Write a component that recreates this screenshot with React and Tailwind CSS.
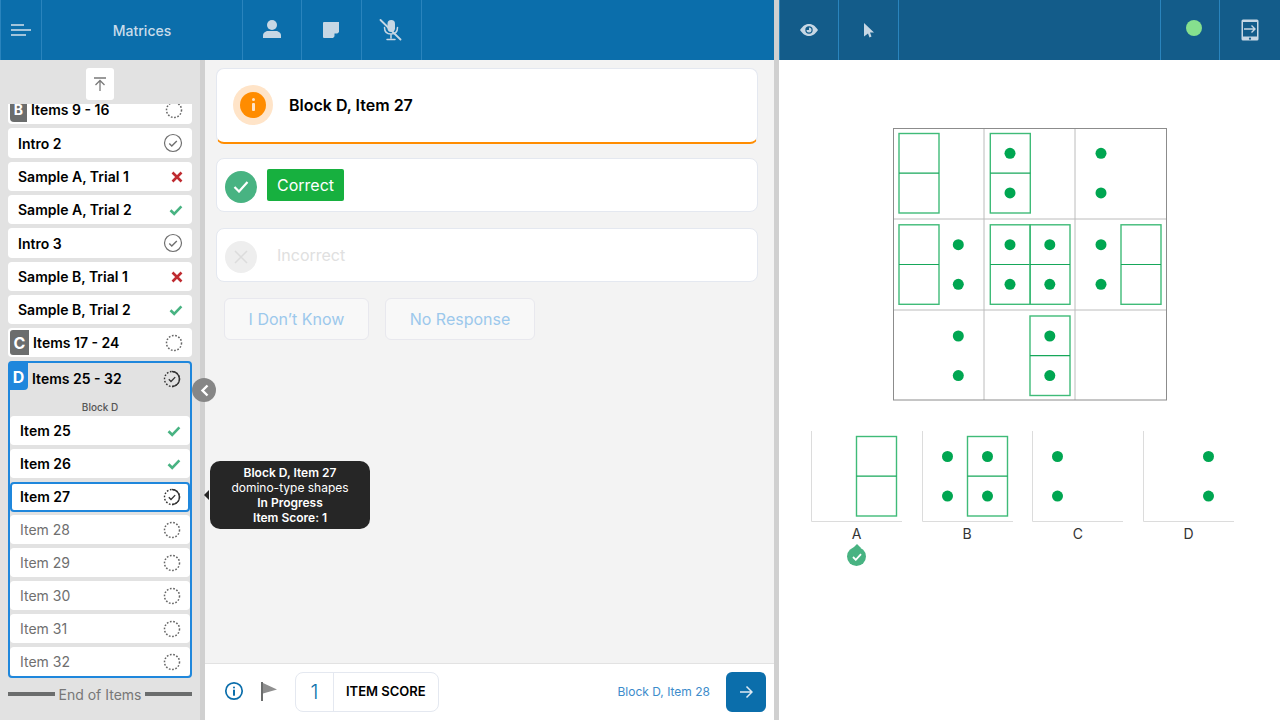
import React from "react";

const Dashed = ({ c = "#666", cls = "" }) => (
  <svg width="18" height="18" viewBox="0 0 18 18" className={`shrink-0 ${cls}`}>
    <circle cx="9" cy="9" r="7.5" fill="none" stroke={c} strokeWidth="1.5" strokeDasharray="1.7 1.6" />
  </svg>
);
const CheckCircle = () => (
  <svg width="20" height="20" viewBox="0 0 20 20" className="shrink-0">
    <circle cx="10" cy="10" r="8.5" fill="none" stroke="#6f6f6f" strokeWidth="1.2" />
    <path d="M6.3 10.4l2.5 2.5 5-5" fill="none" stroke="#6f6f6f" strokeWidth="1.4" />
  </svg>
);
const Progress = () => (
  <svg width="18" height="18" viewBox="0 0 18 18" className="shrink-0">
    <circle cx="9" cy="9" r="7.5" fill="none" stroke="#333" strokeWidth="1.4" strokeDasharray="1.7 1.6" />
    <path d="M9 1.5A7.5 7.5 0 0 1 9 16.5" fill="none" stroke="#333" strokeWidth="1.4" />
    <path d="M5.8 9.3l2.2 2.2 4.2-4.4" fill="none" stroke="#333" strokeWidth="1.3" />
  </svg>
);
const Tick = () => (
  <svg width="14" height="12" viewBox="0 0 14 12" className="shrink-0">
    <path d="M1.5 6.2l3.7 3.6 7.2-7.4" fill="none" stroke="#48b382" strokeWidth="2.6" />
  </svg>
);
const Cross = () => (
  <svg width="12" height="12" viewBox="0 0 12 12" className="shrink-0">
    <path d="M1.5 1.5l9 9M10.5 1.5l-9 9" fill="none" stroke="#bf2b30" strokeWidth="2.6" />
  </svg>
);

const Row = ({ label, icon, h = "h-[29px]", pr = "pr-[9px]" }) => (
  <div className={`${h} ${pr} shrink-0 bg-white rounded-[4px] flex items-center justify-between pl-[10px] text-[14px] font-semibold text-black`}>
    <span>{label}</span>
    {icon}
  </div>
);
const IconBox = ({ children, cls = "" }) => <span className={`w-[20px] flex justify-center ${cls}`}>{children}</span>;

const Item = ({ label, icon, dim, selected }) => (
  <div
    className={`shrink-0 bg-white rounded-[4px] flex items-center justify-between pl-[10px] text-[14px] ${
      dim ? "text-[#6f6f6f] font-normal pr-[9px]" : "text-black font-semibold pr-[9px]"
    } ${selected ? "h-[30px] border-2 border-[#1f87dc] -my-[0.5px]" : "h-[29px]"}`}
  >
    <span className={selected ? "-ml-[2px]" : ""}>{label}</span>
    <span className={selected ? "-mr-[2px] flex" : "flex"}>{icon}</span>
  </div>
);

const HCell = ({ children, cls = "w-[60px]", line = "border-[#2a84bd]" }) => (
  <div className={`${cls} h-full shrink-0 border-r ${line} flex items-center justify-center`}>{children}</div>
);

const Domino = ({ x, y }) => (
  <g fill="none" stroke="#3fbb78" strokeWidth="1.4">
    <rect x={x} y={y} width="40" height="79.5" />
    <line x1={x} x2={x + 40} y1={y + 39.7} y2={y + 39.7} stroke="#16a75a" strokeWidth="1.2" />
  </g>
);
const Dots = ({ x, y }) => (
  <g fill="#00a651">
    <circle cx={x} cy={y} r="5.5" />
    <circle cx={x} cy={y + 39.6} r="5.5" />
  </g>
);

const Matrix = () => (
  <svg width="274" height="273" viewBox="0 0 274 273" className="shrink-0">
    <g stroke="#bcbcbc" strokeWidth="1">
      <line x1="91" x2="91" y1="0" y2="272" />
      <line x1="182" x2="182" y1="0" y2="272" />
      <line x1="0" x2="273" y1="91" y2="91" />
      <line x1="0" x2="273" y1="182" y2="182" />
    </g>
    <rect x="0.5" y="0.5" width="273" height="271.5" fill="none" stroke="#8c8c8c" />
    <Domino x={6} y={5.5} />
    <Domino x={97.3} y={5.5} />
    <Dots x={117} y={25.3} />
    <Dots x={208} y={25.3} />
    <Domino x={6} y={96.8} />
    <Dots x={65.3} y={116.7} />
    <Domino x={97.3} y={96.8} />
    <Domino x={137} y={96.8} />
    <Dots x={117} y={116.7} />
    <Dots x={156.8} y={116.7} />
    <Dots x={208} y={116.7} />
    <Domino x={228} y={96.8} />
    <Dots x={65.3} y={208} />
    <Domino x={137} y={188} />
    <Dots x={156.8} y={208} />
  </svg>
);

const Option = ({ label, children, badge }) => (
  <div className="relative flex flex-col items-center w-[91px] shrink-0">
    <svg width="91" height="91" viewBox="0 0 91 91">
      <path d="M0.5 0V90.5H91" fill="none" stroke="#dcdcdc" />
      {children}
    </svg>
    <span className="mt-[3px] text-[14px] leading-[17px] text-[#333]">{label}</span>
    {badge}
  </div>
);

export default function App() {
  return (
    <div className="w-[1280px] h-[720px] flex overflow-hidden relative font-[Inter,sans-serif] bg-white">
      {/* left half */}
      <div className="w-[774px] h-full flex flex-col shrink-0">
        <header className="h-[60px] bg-[#0b6eab] flex shrink-0 border-l border-[#2a84bd]">
          <HCell cls="w-[41px]">
            <svg width="20" height="12" viewBox="0 0 20 12" fill="none" stroke="#d3e1ec" strokeWidth="1.6" className="-ml-[1px]">
              <path d="M0 1h13M0 6h20M0 11h15" />
            </svg>
          </HCell>
          <HCell cls="w-[201px]">
            <span className="text-[14px] font-medium text-[#c9dcea]">Matrices</span>
          </HCell>
          <HCell cls="w-[59px]">
            <svg width="18" height="18" viewBox="0 0 18 18" fill="#c7d7e4" className="-mt-[2px] -ml-[1px]">
              <circle cx="9" cy="5" r="5" />
              <path d="M0 18v-2.5C0 12.5 3 11 5 11h8c2 0 5 1.5 5 4.5V18z" />
            </svg>
          </HCell>
          <HCell>
            <svg width="16" height="16" viewBox="0 0 16 16" fill="#c7d7e4" className="-ml-[1px]">
              <path d="M1 0h15v10l-6 6H1a1 1 0 0 1-1-1V1a1 1 0 0 1 1-1z" />
              <path d="M11.5 11.5H15L11.5 15z" fill="#0b6eab" />
            </svg>
          </HCell>
          <HCell>
            <svg width="24" height="22" viewBox="0 0 24 22" fill="none" stroke="#c7d7e4" strokeLinecap="round" className="-ml-[1px]">
              <rect x="8.5" y="1" width="7.5" height="12" rx="3.7" fill="#c7d7e4" stroke="none" />
              <path d="M5.5 8.5c0 4 2.5 6.500 6.500 6.500s6.500-2.500 6.500-6.500M12 15v4M8 20.500h8" strokeWidth="1.5" />
              <path d="M1.500 1l20 19.500" strokeWidth="1.8" />
            </svg>
          </HCell>
        </header>
        <div className="flex-1 flex min-h-0">
          {/* sidebar */}
          <aside className="w-[205px] h-full shrink-0 bg-[#e2e2e2] border-r-[5px] border-[#d0d0d0] flex flex-col pl-[8px] pr-[8px]">
            <div className="h-[44px] shrink-0 flex justify-center pt-[8px]">
              <div className="w-[28px] h-[32px] bg-white rounded-[3px] flex items-center justify-center">
                <svg width="14" height="14" viewBox="0 0 14 14" fill="none" stroke="#7a7a7a" strokeWidth="1.3">
                  <path d="M1 1h12M7 14V3.500M2.500 8L7 3.500 11.500 8" />
                </svg>
              </div>
            </div>
            <div className="flex-1 min-h-0">
              <div className="flex flex-col gap-[4px]">
                <div className="h-[20px] shrink-0 bg-white rounded-b-[4px] flex items-start pl-[2px] pr-[8px] text-[14px] leading-[12px] font-semibold text-black">
                  <span className="w-[17px] h-[18px] bg-[#6b6d6d] rounded-bl-[4px] text-white font-bold text-[14px] leading-[12px] flex items-start justify-center">B</span>
                  <span className="ml-[4px] flex-1">Items 9 - 16</span>
                  <IconBox cls="h-[16px] overflow-hidden"><Dashed cls="-mt-[3px]" /></IconBox>
                </div>
                <Row label="Intro 2" h="h-[30px]" icon={<CheckCircle />} />
                <Row label="Sample A, Trial 1" icon={<Cross />} />
                <Row label="Sample A, Trial 2" icon={<Tick />} />
                <Row label="Intro 3" h="h-[30px]" icon={<CheckCircle />} />
                <Row label="Sample B, Trial 1" icon={<Cross />} />
                <Row label="Sample B, Trial 2" icon={<Tick />} />
                <div className="h-[29px] shrink-0 bg-white rounded-[4px] flex items-center pl-[2px] pr-[8px] text-[14px] font-semibold text-black">
                  <span className="w-[19px] h-[25px] bg-[#6b6d6d] rounded-l-[3px] text-white font-bold text-[16px] flex items-center justify-center">C</span>
                  <span className="ml-[4px] flex-1">Items 17 - 24</span>
                  <IconBox><Dashed /></IconBox>
                </div>
                <div className="h-[317px] shrink-0 border-2 border-[#1f87dc] rounded-[4px] flex flex-col">
                  <div className="h-[31px] flex items-center shrink-0 pr-[9px] text-[14px] font-semibold text-black">
                    <span className="self-start w-[19px] h-[27px] bg-[#1f87dc] rounded-br-[4px] text-white font-bold text-[16px] flex items-center justify-center -ml-[1px]">D</span>
                    <span className="ml-[4px] flex-1">Items 25 - 32</span>
                    <Progress />
                  </div>
                  <div className="h-[22px] shrink-0 flex items-end justify-center pb-[4px] text-[10px] font-medium leading-none text-[#555]">Block D</div>
                  <div className="flex flex-col gap-[4px]">
                    <Item label="Item 25" icon={<Tick />} />
                    <Item label="Item 26" icon={<Tick />} />
                    <Item label="Item 27" selected icon={<Progress />} />
                    <Item label="Item 28" dim icon={<Dashed />} />
                    <Item label="Item 29" dim icon={<Dashed />} />
                    <Item label="Item 30" dim icon={<Dashed />} />
                    <Item label="Item 31" dim icon={<Dashed />} />
                    <Item label="Item 32" dim icon={<Dashed />} />
                  </div>
                </div>
                <div className="mt-[2px] h-[20px] flex items-center gap-[4px] text-[14px] text-[#777]">
                  <span className="flex-1 h-[4px] bg-[#6b6d6d]" />
                  <span>End of Items</span>
                  <span className="flex-1 h-[4px] bg-[#6b6d6d]" />
                </div>
              </div>
            </div>
          </aside>
          {/* centre */}
          <main className="flex-1 min-w-0 bg-[#f3f3f3] flex flex-col">
            <div className="flex-1 min-h-0 pt-[8px] pl-[11px] pr-[16px] flex flex-col">
              <div className="h-[76px] bg-white rounded-[8px] border border-[#e4e8f0] border-b-2 border-b-[#ff8c00] flex items-center pl-[16px] pb-[2px]">
                <div className="w-[40px] h-[40px] rounded-full bg-[#ffe4c8] flex items-center justify-center">
                  <div className="w-[26px] h-[26px] rounded-full bg-[#ff8c00] flex flex-col items-center justify-center gap-[2px]">
                    <span className="w-[3px] h-[3px] bg-[#ffe4c8] rounded-full" />
                    <span className="w-[3px] h-[8px] bg-[#ffe4c8] rounded-[1px]" />
                  </div>
                </div>
                <span className="ml-[16px] text-[16px] font-semibold text-black">Block D, Item 27</span>
              </div>
              <div className="mt-[14px] h-[54px] bg-white rounded-[8px] border border-[#e4e8f0] flex items-center pl-[8px]">
                <div className="w-[32px] h-[32px] rounded-full bg-[#48b382] flex items-center justify-center mt-[3px]">
                  <svg width="16" height="13" viewBox="0 0 16 13" fill="none" stroke="#fff" strokeWidth="2.2">
                    <path d="M1.500 7l4.500 4.500 8.500-9.500" />
                  </svg>
                </div>
                <div className="ml-[10px] w-[77px] h-[32px] bg-[#17b03f] rounded-[2px] text-white text-[16px] flex items-center justify-center">Correct</div>
              </div>
              <div className="mt-[16px] h-[54px] bg-white rounded-[8px] border border-[#e4e8f0] flex items-center pl-[8px]">
                <div className="w-[32px] h-[32px] rounded-full bg-[#eeeeee] flex items-center justify-center mt-[3px]">
                  <svg width="14" height="14" viewBox="0 0 14 14" fill="none" stroke="#dcdcdc" strokeWidth="1.5">
                    <path d="M1 1l12 12M13 1L1 13" />
                  </svg>
                </div>
                <span className="ml-[20px] text-[16px] text-[#e0e0e0]">Incorrect</span>
              </div>
              <div className="mt-[16px] flex gap-[16px] pl-[8px]">
                <div className="w-[145px] h-[42px] rounded-[6px] bg-[#f8f8f8] border border-[#e8e8ee] text-[16px] text-[#9cc8ec] flex items-center justify-center">I Don’t Know</div>
                <div className="w-[150px] h-[42px] rounded-[6px] bg-[#f8f8f8] border border-[#e8e8ee] text-[16px] text-[#9cc8ec] flex items-center justify-center">No Response</div>
              </div>
            </div>
            <footer className="h-[57px] shrink-0 bg-white border-t border-[#e2e2e2] flex items-center pl-[19px] pr-[8px]">
              <svg width="20" height="20" viewBox="0 0 20 20" fill="none" className="-mt-[3px]">
                <circle cx="10" cy="10" r="8.2" stroke="#0b6eab" strokeWidth="1.7" />
                <rect x="9" y="5.5" width="2" height="2" rx="1" fill="#0b6eab" />
                <rect x="9" y="8.7" width="2" height="6" fill="#0b6eab" />
              </svg>
              <svg width="17" height="19" viewBox="0 0 17 19" className="ml-[17px] -mt-[1px]">
                <rect x="0" y="0" width="2" height="19" fill="#6b6d6d" />
                <path d="M2 1l14 6.500L2 11.500z" fill="#8f8f8f" />
              </svg>
              <div className="ml-[17px] w-[144px] h-[40px] rounded-[8px] border border-[#e4e8f0] flex items-center">
                <span className="w-[38px] h-full border-r border-[#e4e8f0] flex items-center justify-center text-[20px] font-light text-[#0b6eab]">1</span>
                <span className="ml-[12px] text-[13px] font-semibold text-black">ITEM SCORE</span>
              </div>
              <span className="ml-auto text-[12px] text-[#3d8ccb]">Block D, Item 28</span>
              <div className="ml-[16px] w-[40px] h-[40px] rounded-[6px] bg-[#0b6eab] flex items-center justify-center">
                <svg width="14" height="14" viewBox="0 0 14 14" fill="none" stroke="#dfeaf3" strokeWidth="1.5">
                  <path d="M1 7h12M7.500 1.500L13 7l-5.500 5.500" />
                </svg>
              </div>
            </footer>
          </main>
        </div>
      </div>
      {/* divider */}
      <div className="w-[5px] h-full shrink-0 bg-[#d0d0d0]" />
      {/* right half */}
      <div className="flex-1 min-w-0 h-full flex flex-col bg-white">
        <header className="h-[60px] shrink-0 bg-[#135c8a] flex border-l border-[#2a84bd]">
          <HCell cls="w-[59px]">
            <svg width="18" height="12" viewBox="0 0 18 12">
              <path d="M0 6C3 1.500 6 0 9 0s6 1.500 9 6c-3 4.500-6 6-9 6S3 10.500 0 6z" fill="#c7d7e4" />
              <circle cx="9" cy="6" r="3.7" fill="#135c8a" />
              <path d="M9 3.500a2.500 2.500 0 1 1-2.500 2.500H9z" fill="#c7d7e4" />
            </svg>
          </HCell>
          <HCell cls="w-[60px]">
            <svg width="10" height="15" viewBox="0 0 10 15" fill="#c7d7e4">
              <path d="M0 0l10 9.500H6l1.500 4-2 1L4 10.500 0 13.500z" />
            </svg>
          </HCell>
          <HCell cls="flex-1" />
          <HCell cls="w-[59px]">
            <span className="w-[16px] h-[16px] rounded-full bg-[#86e08e] -mt-[4px] ml-[8px]" />
          </HCell>
          <div className="w-[60px] h-full flex items-center justify-center">
            <svg width="18" height="22" viewBox="0 0 18 22" fill="none">
              <rect x="0.5" y="0.5" width="17" height="21" rx="1.5" fill="#c7d7e4" />
              <rect x="2" y="3" width="14" height="14.5" fill="#135c8a" />
              <circle cx="9" cy="19.7" r="1.1" fill="#135c8a" />
              <path d="M3 10h11M10.500 6.500L14 10l-3.500 3.500" stroke="#c7d7e4" strokeWidth="1.4" />
            </svg>
          </div>
        </header>
        <div className="flex-1 min-h-0 flex flex-col items-center">
          <div className="mt-[68px] ml-[1px]"><Matrix /></div>
          <div className="mt-[30px] self-start pl-[32px] flex gap-[19.67px]">
            <Option
              label="A"
              badge={
                <div className="absolute left-[36px] top-[113px] flex flex-col items-center">
                  <span className="w-0 h-0 border-l-[4px] border-r-[4px] border-b-[4px] border-l-transparent border-r-transparent border-b-[#48b382]" />
                  <span className="w-[19px] h-[19px] -mt-[1px] rounded-full bg-[#48b382] flex items-center justify-center">
                    <svg width="10" height="8" viewBox="0 0 10 8" fill="none" stroke="#fff" strokeWidth="1.8">
                      <path d="M1 4l2.800 2.800L9 1.200" />
                    </svg>
                  </span>
                </div>
              }
            >
              <Domino x={45.5} y={5.5} />
            </Option>
            <Option label="B">
              <Dots x={25.5} y={25.5} />
              <Domino x={45.5} y={5.5} />
              <Dots x={65.5} y={25.5} />
            </Option>
            <Option label="C">
              <Dots x={25.5} y={25.5} />
            </Option>
            <Option label="D">
              <Dots x={65.5} y={25.5} />
            </Option>
          </div>
        </div>
      </div>

      {/* overlays */}
      <div className="absolute left-[192px] top-[378px] w-[24px] h-[24px] rounded-full bg-[#868686] flex items-center justify-center">
        <svg width="9" height="13" viewBox="0 0 9 13" fill="none" stroke="#fff" strokeWidth="2.4">
          <path d="M7.500 1.500L2.500 6.500l5 5" />
        </svg>
      </div>
      <div className="absolute left-[204px] top-[490px] w-0 h-0 border-y-[5px] border-r-[5px] border-y-transparent border-r-[#262626]" />
      <div className="absolute left-[210px] top-[461px] w-[160px] h-[68px] rounded-[10px] bg-[#262626] text-white text-[12px] leading-[15px] text-center flex flex-col justify-center">
        <span className="font-semibold">Block D, Item 27</span>
        <span>domino-type shapes</span>
        <span className="font-semibold">In Progress</span>
        <span className="font-semibold">Item Score: 1</span>
      </div>
    </div>
  );
}
